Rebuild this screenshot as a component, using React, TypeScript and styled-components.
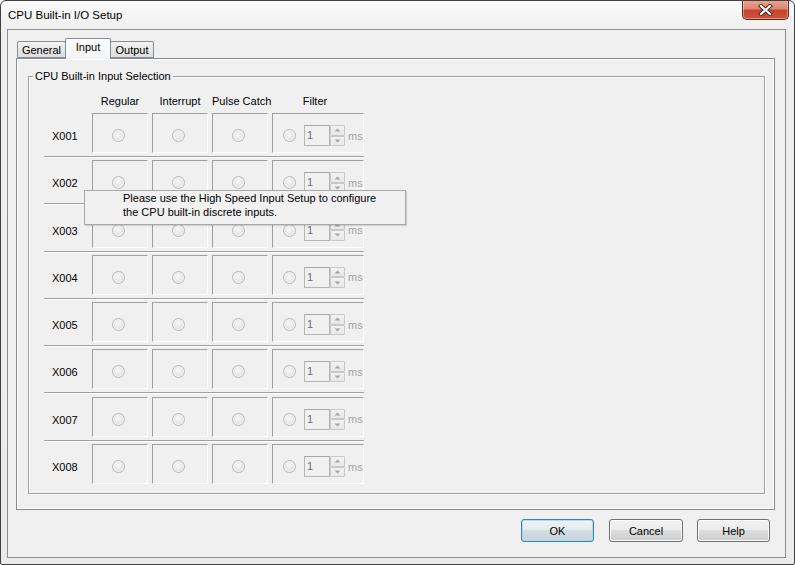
import React from 'react';
import styled, { createGlobalStyle } from 'styled-components';

const GlobalStyle = createGlobalStyle`
  html, body {
    margin: 0;
    padding: 0;
    background: #ffffff;
  }
  body {
    font-family: 'Liberation Sans', Arial, sans-serif;
    font-size: 11px;
    color: #000;
  }
`;

const Window = styled.div`
  box-sizing: border-box;
  width: 795px;
  height: 565px;
  border: 1px solid #404040;
  border-radius: 6px 6px 2px 2px;
  background: linear-gradient(#fbfbfb, #eeeeee 30px, #ebebeb);
  display: flex;
  flex-direction: column;
  overflow: hidden;
`;

const TitleBar = styled.div`
  height: 28px;
  flex: none;
  display: flex;
  align-items: flex-start;
  padding: 0 5px 0 7px;
`;

const Title = styled.div`
  font-size: 11.5px;
  line-height: 28px;
  color: #000;
`;

const CloseButton = styled.div`
  margin-left: auto;
  margin-top: -1px;
  box-sizing: border-box;
  width: 47px;
  height: 20px;
  border: 1px solid #5b2a22;
  border-top: none;
  border-radius: 0 0 5px 5px;
  background: linear-gradient(#e9a998 0%, #db8670 45%, #c7432a 55%, #c9553a 100%);
  box-shadow: inset 0 0 0 1px rgba(255, 220, 210, 0.45);
  display: flex;
  align-items: center;
  justify-content: center;
`;

const Client = styled.div`
  flex: 1;
  margin: 0 8px 6px 6px;
  border: 1px solid #8e8e8e;
  background: #f0f0f0;
  display: flex;
  flex-direction: column;
  padding: 8px 10px 0 8px;
`;

const TabStrip = styled.div`
  height: 20px;
  display: flex;
  align-items: flex-end;
  padding-left: 1px;
  position: relative;
  z-index: 1;
`;

const Tab = styled.div<{ $active?: boolean; $w: number }>`
  box-sizing: border-box;
  width: ${p => p.$w}px;
  height: ${p => (p.$active ? 21 : 17)}px;
  margin-bottom: ${p => (p.$active ? -1 : 0)}px;
  margin-left: -1px;
  border: 1px solid #898c95;
  border-bottom: ${p => (p.$active ? 'none' : '1px solid #898c95')};
  border-radius: 2px 2px 0 0;
  background: ${p =>
    p.$active
      ? 'linear-gradient(#fdfdfd, #f4f4f4)'
      : 'linear-gradient(#f4f4f4, #e7e7e7 50%, #dedede)'};
  position: relative;
  z-index: ${p => (p.$active ? 2 : 1)};
  text-align: center;
  line-height: ${p => (p.$active ? 17 : 16)}px;
  &:first-child {
    margin-left: 0;
  }
`;

const Panel = styled.div`
  box-sizing: border-box;
  height: 452px;
  border: 1px solid #898c95;
  background: #f0f0f0;
  box-shadow: inset 1px 1px 0 #ffffff, inset -1px -1px 0 #ffffff;
  padding: 17px 9px 0 11px;
`;

const GroupBox = styled.div`
  box-sizing: border-box;
  position: relative;
  height: 418px;
  border: 1px solid #a0a0a0;
  box-shadow: inset 1px 1px 0 #ffffff, 1px 1px 0 #ffffff;
  padding: 18px 0 0 15px;
`;

const GroupLabel = styled.div`
  position: absolute;
  left: 4px;
  top: -7px;
  padding: 0 2px;
  line-height: 13px;
  background: #f0f0f0;
`;

const HeaderRow = styled.div`
  display: grid;
  grid-template-columns: 44px 56px 56px 56px 92px;
  column-gap: 4px;
  height: 13px;
  line-height: 13px;
  margin-bottom: 5px;
`;

const HeaderCell = styled.div<{ $shift?: number }>`
  text-align: center;
  white-space: nowrap;
  padding-right: ${p => p.$shift ?? 0}px;
`;

const Row = styled.div`
  height: 47.3px;
  width: 320px;
`;

const RowCells = styled.div`
  display: grid;
  grid-template-columns: 44px 56px 56px 56px 92px;
  column-gap: 4px;
  height: 40px;
`;

const RowLabel = styled.div`
  display: flex;
  align-items: center;
  padding: 6px 0 0 8px;
`;

const Cell = styled.div<{ $wide?: boolean }>`
  box-sizing: border-box;
  height: 40px;
  border-top: 1px solid #a0a0a0;
  border-left: 1px solid #a0a0a0;
  border-right: 1px solid #ffffff;
  border-bottom: 1px solid #ffffff;
  display: flex;
  align-items: center;
  justify-content: ${p => (p.$wide ? 'flex-start' : 'center')};
  padding: 5px ${p => (p.$wide ? 0 : 4)}px 0 ${p => (p.$wide ? 10 : 0)}px;
`;

const Separator = styled.div`
  margin-top: 3px;
  height: 0;
  border-top: 1px solid #a0a0a0;
  border-bottom: 1px solid #ffffff;
`;

const Radio = styled.span`
  box-sizing: border-box;
  flex: none;
  width: 13px;
  height: 13px;
  border-radius: 50%;
  border: 1px solid #b9b9b9;
  background: radial-gradient(circle at 45% 40%, #f7f7f7 0%, #e9e9e9 45%, #d6d6d6 100%);
  box-shadow: inset 0 0 0 1px #f4f4f4;
`;

const Edit = styled.div`
  box-sizing: border-box;
  width: 26px;
  height: 21px;
  margin-left: 8px;
  border: 1px solid #b5b5b5;
  border-top-color: #a7a7a7;
  background: #f0f0f0;
  color: #6d6d6d;
  padding-left: 2px;
  line-height: 18px;
`;

const Spin = styled.div`
  display: flex;
  flex-direction: column;
  width: 15px;
  height: 21px;
`;

const SpinButton = styled.div`
  box-sizing: border-box;
  flex: 1;
  border: 1px solid #c8c8c8;
  border-radius: 1px;
  background: linear-gradient(#f2f2f2, #e8e8e8);
  display: flex;
  align-items: center;
  justify-content: center;
`;

const Unit = styled.span`
  margin-left: 3px;
  color: #a3a3a3;
`;

const Tooltip = styled.div`
  position: absolute;
  left: 55px;
  top: 113px;
  box-sizing: border-box;
  width: 322px;
  height: 35px;
  border: 1px solid #a8a8a8;
  background: #f1f1f1;
  box-shadow: 1px 1px 1px rgba(0, 0, 0, 0.12);
  padding: 0 0 0 38px;
  line-height: 14px;
  color: #000;
`;

const ButtonRow = styled.div`
  display: flex;
  justify-content: flex-end;
  gap: 14px;
  padding: 9px 5px 0 0;
`;

const Button = styled.div<{ $default?: boolean; $w?: number }>`
  box-sizing: border-box;
  width: ${p => p.$w ?? 73}px;
  height: 23px;
  margin-right: ${p => (p.$default ? 1 : 0)}px;
  border: 1px solid ${p => (p.$default ? '#3c7fb1' : '#707070')};
  border-radius: 3px;
  background: ${p =>
    p.$default
      ? 'linear-gradient(#edf3f6 0%, #e3ebf0 50%, #d3dde3 50%, #c8d3da 100%)'
      : 'linear-gradient(#f2f2f2 0%, #ebebeb 50%, #dddddd 50%, #cfcfcf 100%)'};
  box-shadow: inset 0 0 0 1px ${p => (p.$default ? '#a9dcf6' : '#fbfbfb')};
  display: flex;
  align-items: center;
  justify-content: center;
  color: #000;
`;

const Arrow = ({ up }: { up?: boolean }) => (
  <svg width="7" height="4" viewBox="0 0 7 4">
    <path d={up ? 'M0.5 3.5 L3.5 0.5 L6.5 3.5 Z' : 'M0.5 0.5 L3.5 3.5 L6.5 0.5 Z'} fill="#a6a6a6" />
  </svg>
);

const CloseGlyph = () => (
  <svg width="15" height="12" viewBox="0 0 15 12">
    <path d="M3 2 L12 10 M12 2 L3 10" stroke="#4a2a24" strokeWidth="4.2" strokeLinecap="square" />
    <path d="M3 2 L12 10 M12 2 L3 10" stroke="#ffffff" strokeWidth="2.2" strokeLinecap="square" />
  </svg>
);

const inputs = ['X001', 'X002', 'X003', 'X004', 'X005', 'X006', 'X007', 'X008'];

export default function App() {
  return (
    <>
      <GlobalStyle />
      <Window>
        <TitleBar>
          <Title>CPU Built-in I/O Setup</Title>
          <CloseButton>
            <CloseGlyph />
          </CloseButton>
        </TitleBar>
        <Client>
          <TabStrip>
            <Tab $w={49}>General</Tab>
            <Tab $w={46} $active>
              Input
            </Tab>
            <Tab $w={44}>Output</Tab>
          </TabStrip>
          <Panel>
            <GroupBox>
              <GroupLabel>CPU Built-in Input Selection</GroupLabel>
              <HeaderRow>
                <div />
                <HeaderCell>Regular</HeaderCell>
                <HeaderCell>Interrupt</HeaderCell>
                <HeaderCell>Pulse Catch</HeaderCell>
                <HeaderCell $shift={6}>Filter</HeaderCell>
              </HeaderRow>
              {inputs.map((name, i) => (
                <Row key={name}>
                  <RowCells>
                    <RowLabel>{name}</RowLabel>
                    <Cell>
                      <Radio />
                    </Cell>
                    <Cell>
                      <Radio />
                    </Cell>
                    <Cell>
                      <Radio />
                    </Cell>
                    <Cell $wide>
                      <Radio />
                      <Edit>1</Edit>
                      <Spin>
                        <SpinButton>
                          <Arrow up />
                        </SpinButton>
                        <SpinButton>
                          <Arrow />
                        </SpinButton>
                      </Spin>
                      <Unit>ms</Unit>
                    </Cell>
                  </RowCells>
                  {i < inputs.length - 1 && <Separator />}
                </Row>
              ))}
              <Tooltip>
                Please use the High Speed Input Setup to configure
                <br />
                the CPU built-in discrete inputs.
              </Tooltip>
            </GroupBox>
          </Panel>
          <ButtonRow>
            <Button $default>OK</Button>
            <Button $w={74}>Cancel</Button>
            <Button>Help</Button>
          </ButtonRow>
        </Client>
      </Window>
    </>
  );
}
